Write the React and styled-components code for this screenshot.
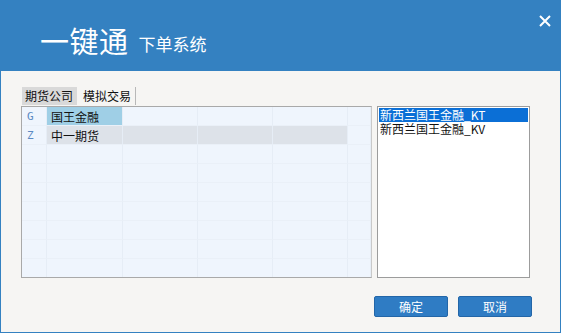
import React from "react";
import styled, { createGlobalStyle } from "styled-components";

const Global = createGlobalStyle`
  html, body { margin: 0; padding: 0; }
  body { width: 561px; height: 333px; overflow: hidden; font-family: "Noto Sans CJK SC", "Noto Sans", sans-serif; }
  * { box-sizing: border-box; }
`;

const Window = styled.div`
  width: 561px;
  height: 333px;
  display: flex;
  flex-direction: column;
`;

const Header = styled.div`
  height: 71px;
  background: #3481c1;
  position: relative;
  display: flex;
  align-items: center;
  padding: 10px 0 0 40px;
  color: #fff;
`;

const Title = styled.span`
  font-size: 29px;
  line-height: 1;
  letter-spacing: 0.5px;
`;

const Subtitle = styled.span`
  font-size: 17px;
  margin-left: 10px;
  margin-top: 5px;
`;

const Close = styled.div`
  position: absolute;
  right: 10px;
  top: 8px;
  width: 12px;
  height: 12px;
`;

const Body = styled.div`
  flex: 1;
  background: #f6f5f3;
  border: 1px solid #3481c1;
  border-top: none;
  padding: 16px 28px 0 20px;
  display: flex;
  flex-direction: column;
`;

const Tabs = styled.div`
  display: flex;
  height: 19px;
  margin-left: 1px;
`;

const Tab = styled.div`
  font-size: 12px;
  padding: 0 4px 0 3px;
  line-height: 17px;
  height: 18px;
  color: #111;
  background: ${(p) => (p.$active ? "#d9d9d9" : "transparent")};
  border-right: ${(p) => (p.$last ? "1px solid #b8b8b8" : "none")};
  margin-right: ${(p) => (p.$active ? "3px" : "0")};
`;

const Main = styled.div`
  display: flex;
  gap: 5px;
`;

const Grid = styled.div`
  width: 351px;
  height: 172px;
  border: 1px solid #a9a9a9;
  border-right-color: #c9c9c9;
  background: #eff5fd;
  display: grid;
  grid-template-columns: 25px 76px 75px 75px 75px 23px;
  grid-auto-rows: 19px;
  overflow: hidden;
`;

const Cell = styled.div`
  border-right: 1px solid #e6edf6;
  border-bottom: 1px solid #eaf0f8;
  font-size: 12px;
  line-height: 19px;
  padding-left: 4px;
  color: #111;
  background: ${(p) => (p.$sel ? "#9fcfe6" : p.$gray ? "#dde2e9" : "transparent")};
`;

const Letter = styled(Cell)`
  color: #5b89c2;
  font-family: "DejaVu Sans Mono", monospace;
  font-size: 11px;
  padding-left: 5px;
`;

const List = styled.div`
  width: 153px;
  height: 172px;
  border: 1px solid #9c9c9c;
  background: #fff;
  padding: 1px;
`;

const Item = styled.div`
  font-size: 12px;
  line-height: 14px;
  height: 14px;
  padding-left: 1px;
  color: ${(p) => (p.$sel ? "#fff" : "#111")};
  background: ${(p) => (p.$sel ? "#0b6fd6" : "transparent")};
  white-space: nowrap;
`;

const Footer = styled.div`
  display: flex;
  justify-content: flex-end;
  gap: 10px;
  margin-top: 18px;
`;

const Button = styled.button`
  width: 74px;
  height: 21px;
  background: #2f7cc4;
  border: 1px solid #2366a8;
  border-radius: 2px;
  color: #fff;
  font-family: inherit;
  font-size: 12px;
  padding: 0;
  line-height: 19px;
`;

const rows = [
  { l: "G", name: "国王金融", sel: true },
  { l: "Z", name: "中一期货", gray: true },
];

export default function App() {
  const gridRows = [];
  for (let i = 0; i < 9; i++) {
    const r = rows[i];
    gridRows.push(
      <React.Fragment key={i}>
        <Letter>{r ? r.l : ""}</Letter>
        <Cell $sel={r && r.sel} $gray={r && r.gray}>{r ? r.name : ""}</Cell>
        <Cell $gray={r && r.gray} />
        <Cell $gray={r && r.gray} />
        <Cell $gray={r && r.gray} />
        <Cell />
      </React.Fragment>
    );
  }
  return (
    <Window>
      <Global />
      <Header>
        <Title>一键通</Title>
        <Subtitle>下单系统</Subtitle>
        <Close>
          <svg width="12" height="12" viewBox="0 0 12 12">
            <path d="M1 1L11 11M11 1L1 11" stroke="#fff" strokeWidth="2" />
          </svg>
        </Close>
      </Header>
      <Body>
        <Tabs>
          <Tab $active>期货公司</Tab>
          <Tab $last>模拟交易</Tab>
        </Tabs>
        <Main>
          <Grid>{gridRows}</Grid>
          <List>
            <Item $sel>新西兰国王金融_KT</Item>
            <Item>新西兰国王金融_KV</Item>
          </List>
        </Main>
        <Footer>
          <Button>确定</Button>
          <Button>取消</Button>
        </Footer>
      </Body>
    </Window>
  );
}
